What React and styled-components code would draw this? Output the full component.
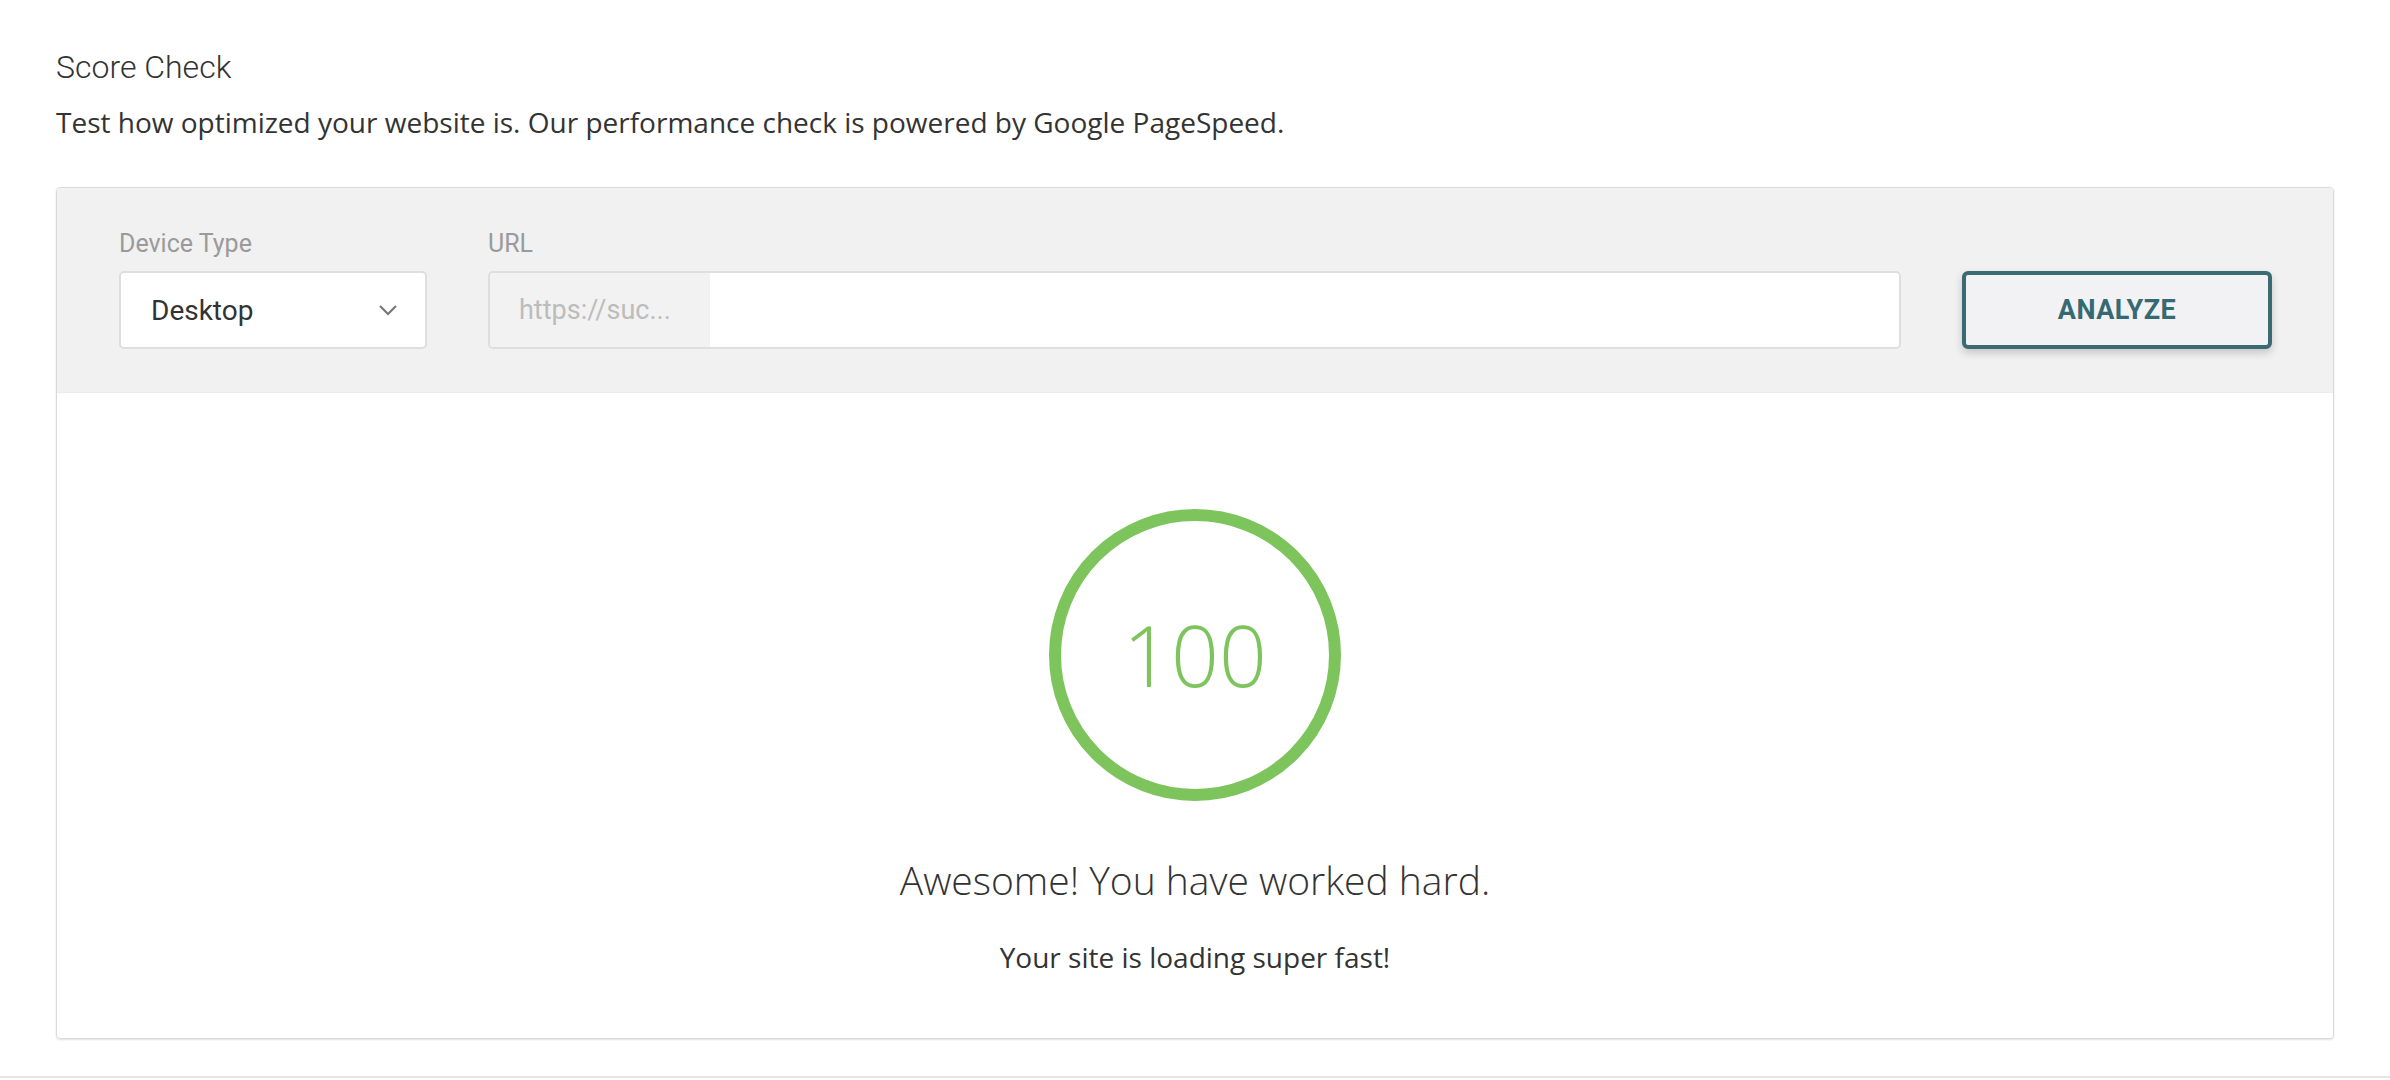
import React from 'react';
import styled, { createGlobalStyle } from 'styled-components';

const GlobalStyle = createGlobalStyle`
  html, body {
    margin: 0;
    padding: 0;
    background: #fff;
  }
  body {
    font-family: 'Open Sans', 'Liberation Sans', sans-serif;
    color: #333;
  }
`;

const Page = styled.div`
  min-height: 1078px;
  border-bottom: 2px solid #e6e6e6;
  padding: 47px 56px 0 56px;
  box-sizing: border-box;
`;

const Title = styled.h2`
  margin: 0;
  font-family: Roboto, 'Liberation Sans', sans-serif;
  font-weight: 300;
  font-size: 32px;
  line-height: 40px;
  color: #333;
`;

const Intro = styled.p`
  margin: 16px 0 0;
  font-size: 28px;
  line-height: 38px;
  color: #333;
`;

const Panel = styled.section`
  margin-top: 46px;
  border: 1px solid #dadada;
  border-radius: 4px;
  box-shadow: 0 1px 2px rgba(0, 0, 0, 0.12);
  overflow: hidden;
`;

const Toolbar = styled.div`
  display: grid;
  grid-template-columns: 308px 1fr 310px;
  column-gap: 61px;
  align-items: end;
  background: #f1f1f1;
  padding: 41px 61px 43px 62px;
  border-bottom: 1px solid #ececec;
`;

const Field = styled.label`
  display: flex;
  flex-direction: column;
  gap: 12px;
`;

const Label = styled.span`
  font-family: Roboto, 'Liberation Sans', sans-serif;
  font-size: 25px;
  line-height: 30px;
  color: #9a9a9a;
`;

const Select = styled.div`
  height: 78px;
  box-sizing: border-box;
  display: flex;
  align-items: center;
  justify-content: space-between;
  padding: 0 27px 0 30px;
  background: #fff;
  border: 2px solid #dedede;
  border-radius: 5px;
  font-family: Roboto, 'Liberation Sans', sans-serif;
  font-size: 28px;
  color: #333;
`;

const UrlBox = styled.div`
  height: 78px;
  box-sizing: border-box;
  display: flex;
  background: #fff;
  border: 2px solid #dedede;
  border-radius: 5px;
  overflow: hidden;
`;

const Prefix = styled.span`
  width: 220px;
  display: flex;
  align-items: center;
  padding-left: 29px;
  box-sizing: border-box;
  background: #f2f2f2;
  font-family: Roboto, 'Liberation Sans', sans-serif;
  font-size: 27px;
  color: #bcbcbc;
`;

const UrlInput = styled.input`
  flex: 1;
  border: 0;
  outline: none;
  background: #fff;
  padding: 0 20px;
  font-family: Roboto, 'Liberation Sans', sans-serif;
  font-size: 25px;
`;

const AnalyzeButton = styled.button`
  height: 78px;
  box-sizing: border-box;
  background: #f2f2f4;
  border: 4px solid #3a6b73;
  border-radius: 6px;
  box-shadow: 0 4px 8px rgba(0, 0, 0, 0.18);
  font-family: Roboto, 'Liberation Sans', sans-serif;
  font-weight: 700;
  font-size: 27px;
  letter-spacing: 0.5px;
  color: #356a72;
  cursor: pointer;
`;

const Result = styled.div`
  display: flex;
  flex-direction: column;
  align-items: center;
  padding: 116px 0 63px;
`;

const Ring = styled.div`
  width: 292px;
  height: 292px;
  box-sizing: border-box;
  border: 12px solid #7dc45d;
  border-radius: 50%;
  display: flex;
  align-items: center;
  justify-content: center;
`;

const Score = styled.span`
  font-weight: 300;
  font-size: 84px;
  line-height: 1;
  color: #7dc45d;
`;

const Headline = styled.h3`
  margin: 53px 0 0;
  font-weight: 300;
  font-size: 39px;
  line-height: 52px;
  color: #333;
`;

const Note = styled.p`
  margin: 33px 0 0;
  font-size: 28px;
  line-height: 36px;
  color: #333;
`;

function Chevron() {
  return (
    <svg width="20" height="12" viewBox="0 0 20 12" fill="none">
      <path d="M2 2l8 8 8-8" stroke="#777" strokeWidth="2.2" />
    </svg>
  );
}

export default function App() {
  return (
    <>
      <GlobalStyle />
      <Page>
        <Title>Score Check</Title>
        <Intro>
          Test how optimized your website is. Our performance check is powered by Google PageSpeed.
        </Intro>
        <Panel>
          <Toolbar>
            <Field>
              <Label>Device Type</Label>
              <Select>
                Desktop
                <Chevron />
              </Select>
            </Field>
            <Field>
              <Label>URL</Label>
              <UrlBox>
                <Prefix>https://suc...</Prefix>
                <UrlInput type="text" />
              </UrlBox>
            </Field>
            <AnalyzeButton type="button">ANALYZE</AnalyzeButton>
          </Toolbar>
          <Result>
            <Ring>
              <Score>100</Score>
            </Ring>
            <Headline>Awesome! You have worked hard.</Headline>
            <Note>Your site is loading super fast!</Note>
          </Result>
        </Panel>
      </Page>
    </>
  );
}
